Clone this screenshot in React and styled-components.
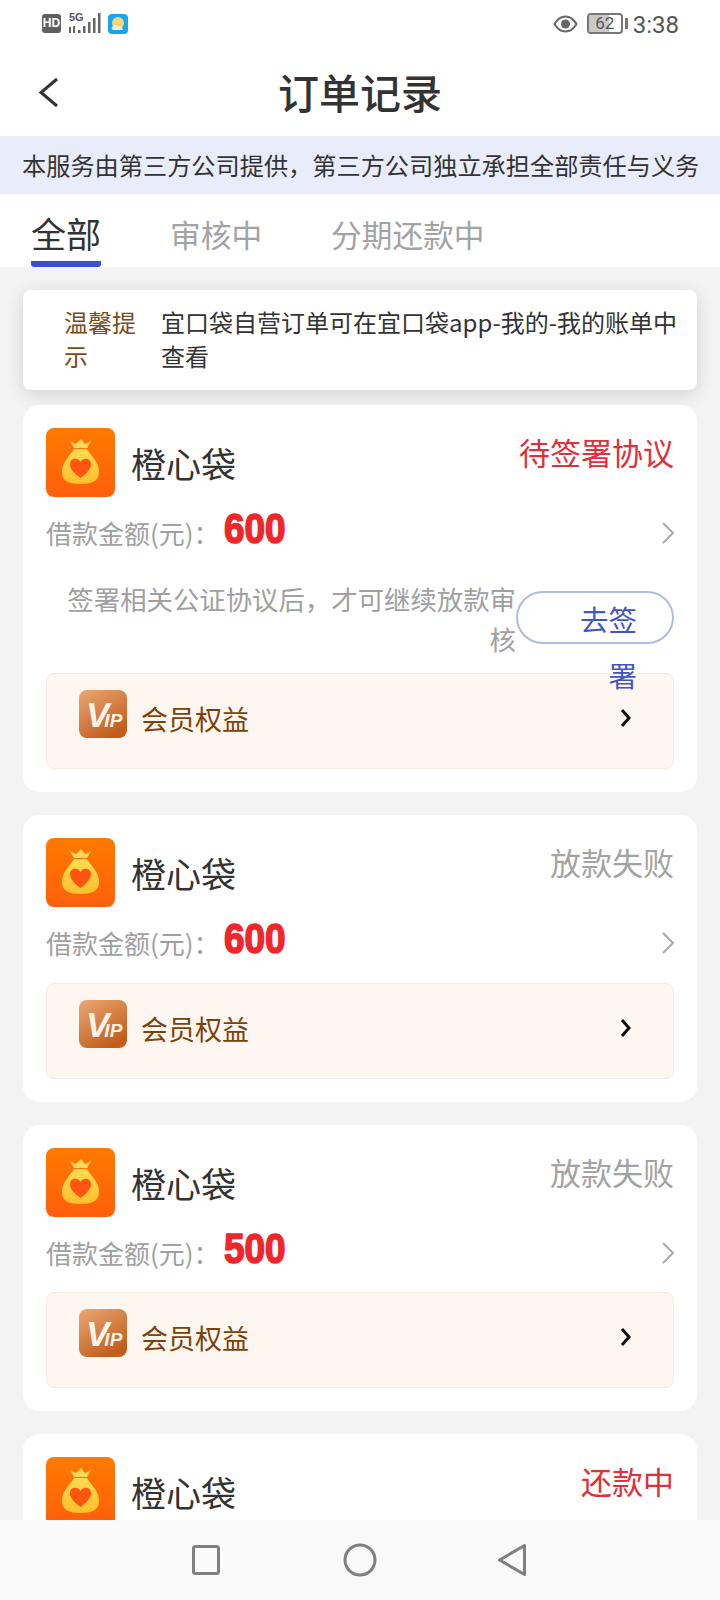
import styled, { createGlobalStyle } from "styled-components";

const GlobalStyle = createGlobalStyle`
    html, body {
        margin: 0;
        padding: 0;
        background: #f3f3f3;
    }
    * {
        box-sizing: border-box;
    }
`

const Page = styled.div`
    width: 720px;
    height: 1600px;
    display: flex;
    flex-direction: column;
    overflow: hidden;
    background: #f3f3f3;
    font-family: "Noto Sans CJK SC", "Noto Sans", sans-serif;
    color: #333;
`

const StatusBar = styled.div`
    height: 50px;
    flex: none;
    display: flex;
    align-items: center;
    justify-content: space-between;
    padding: 0 41px 3px 42px;
    background: #fff;
`

const StatusGroup = styled.div`
    display: flex;
    align-items: center;
`

const HdBadge = styled.span`
    width: 19px;
    height: 19px;
    border-radius: 3px;
    background: #5f5f5f;
    color: #fff;
    font: bold 12px/19px "Liberation Sans", sans-serif;
    text-align: center;
`

const SignalBox = styled.div`
    position: relative;
    width: 34px;
    height: 22px;
    margin: 0 6px 0 7px;
`

const FiveG = styled.span`
    position: absolute;
    left: 1px;
    top: -2px;
    font: bold 11px/12px "Liberation Sans Narrow", "Liberation Sans", sans-serif;
    color: #555;
`

const Time = styled.span`
    margin-left: 5px;
    margin-top: 2px;
    font: 24px/30px "Roboto", "Liberation Sans", sans-serif;
    color: #555;
`

const BatteryBox = styled.div`
    position: relative;
    width: 36px;
    height: 21px;
    margin-left: 9px;
    border: 2px solid #777;
    border-radius: 4px;
    overflow: hidden;
    font: 17px/17px "Roboto", "Liberation Sans", sans-serif;
    color: #555;
    text-align: center;
`

const BatteryFill = styled.div`
    position: absolute;
    left: 0;
    top: 0;
    bottom: 0;
    width: ${p => p.$level}%;
    background: #c9c9c9;
`

const BatteryValue = styled.span`
    position: relative;
`

const BatteryCap = styled.div`
    width: 3px;
    height: 11px;
    margin-left: 2px;
    background: #777;
`

const NavBar = styled.div`
    height: 86px;
    flex: none;
    display: flex;
    align-items: center;
    justify-content: center;
    position: relative;
    padding-bottom: 4px;
    background: #fff;
`

const BackButton = styled.div`
    position: absolute;
    left: 36px;
    top: 24px;
    width: 26px;
    height: 36px;
`

const Title = styled.h1`
    margin: 0;
    font-size: 41px;
    font-weight: 500;
    line-height: 56px;
    color: #333;
`

const Notice = styled.div`
    height: 58px;
    flex: none;
    padding-left: 22px;
    background: #e9ecfb;
    font-size: 24.2px;
    line-height: 58px;
    color: #333;
    white-space: nowrap;
`

const Tabs = styled.div`
    height: 73px;
    flex: none;
    display: flex;
    padding-left: 31px;
    gap: 69px;
    background: #fff;
`

const Tab = styled.div`
    height: 73px;
    border-bottom: 6px solid ${p => (p.$active ? "#3a50d0" : "transparent")};
    border-radius: 0 0 3px 3px;
    font-size: ${p => (p.$active ? "35px" : "30.7px")};
    line-height: ${p => (p.$active ? "77px" : "80px")};
    color: ${p => (p.$active ? "#333" : "#a3a3a3")};
    white-space: nowrap;
`

const List = styled.div`
    flex: 1;
    min-height: 0;
    overflow: hidden;
    display: flex;
    flex-direction: column;
    gap: 23px;
    padding: 23px 23px 0;
`

const TipCard = styled.div`
    flex: none;
    height: 100px;
    margin-bottom: -8px;
    display: flex;
    padding: 15px 0 0 41px;
    background: #fff;
    border-radius: 8px;
    box-shadow: 0 4px 18px rgba(0, 0, 0, 0.14);
    font-size: 24px;
    line-height: 34px;
`

const TipLabel = styled.div`
    width: 72px;
    flex: none;
    color: #7a4a17;
`

const TipText = styled.div`
    width: 530px;
    margin-left: 25px;
    color: #333;
`

const Card = styled.div`
    flex: none;
    padding: 23px;
    background: #fff;
    border-radius: 16px;
`

const CardHead = styled.div`
    height: 69px;
    display: flex;
`

const BrandName = styled.div`
    margin-left: 16px;
    font-size: 35px;
    line-height: 69px;
    color: #333;
`

const OrderStatus = styled.div`
    margin-left: auto;
    font-size: 31px;
    line-height: 48px;
    color: ${p => (p.$alert ? "#e0303a" : "#a3a3a3")};
`

const AmountRow = styled.div`
    height: 48px;
    margin-top: 12px;
    display: flex;
    align-items: center;
`

const AmountLabel = styled.span`
    font-size: 26px;
    line-height: 48px;
    color: #a0a0a0;
`

const AmountValue = styled.span`
    margin-left: 4px;
    width: 62px;
    transform: scaleX(0.88);
    transform-origin: left center;
    font: bold 42px/48px "Liberation Sans", sans-serif;
    color: #f0262c;
    -webkit-text-stroke: 1.6px #f0262c;
    position: relative;
    top: -4px;
`

const RowArrow = styled.div`
    margin-left: auto;
    width: 16px;
    height: 24px;
    margin-right: -2px;
`

const SignRow = styled.div`
    height: 80px;
    margin-top: 22px;
    margin-bottom: 14px;
    display: flex;
    justify-content: flex-end;
`

const SignText = styled.div`
    width: 470px;
    padding-left: 20px;
    font-size: 26.4px;
    line-height: 40px;
    color: #a0a0a0;
    text-align: right;
`

const SignButton = styled.div`
    width: 158px;
    height: 53px;
    margin-top: 12px;
    flex: none;
    display: flex;
    justify-content: flex-end;
    padding-right: 35px;
    border: 2px solid #b0bbe4;
    border-radius: 27px;
`

const SignLabel = styled.div`
    width: 58px;
    flex: none;
    margin-top: -2px;
    font-size: 28.5px;
    line-height: 56px;
    color: #3f55c8;
    text-align: right;
`

const VipBox = styled.div`
    height: 96px;
    margin-top: ${p => (p.$plain ? "15.5px" : "0")};
    display: flex;
    padding: 16px 40px 0 32px;
    background: #fdf6f1;
    border: 1px solid #f8ebe1;
    border-radius: 8px;
`

const VipName = styled.div`
    margin-left: 14px;
    font-size: 27px;
    line-height: 58px;
    color: #7c4208;
`

const VipArrow = styled.div`
    margin-left: auto;
    width: 14px;
    height: 22px;
    margin-top: 17px;
`

const SystemBar = styled.div`
    height: 80px;
    flex: none;
    display: flex;
    align-items: center;
    justify-content: center;
    gap: 120px;
    background: #fafafa;
`

function BagIcon() {
    return (
        <svg width="69" height="69" viewBox="0 0 69 69">
            <defs>
                <linearGradient id="bagBg" x1="0" y1="0" x2="0" y2="1">
                    <stop offset="0" stopColor="#ff7a00" />
                    <stop offset="1" stopColor="#ff5f0c" />
                </linearGradient>
                <linearGradient id="bagFill" x1="0" y1="0" x2="0" y2="1">
                    <stop offset="0" stopColor="#ffdc50" />
                    <stop offset="1" stopColor="#ffbf2c" />
                </linearGradient>
            </defs>
            <rect width="69" height="69" rx="8" fill="url(#bagBg)" />
            <path d="M24 13 L30 16 L35 11 L39 16 L45 13 L41 20 H28 Z" fill="#ffd75a" />
            <path d="M28 21 H41 C44 27 53 33 53 44 C53 52 48 56 34.5 56 C21 56 16 52 16 44 C16 33 25 27 28 21 Z" fill="url(#bagFill)" />
            <path d="M34.5 50 C28 45 24 41 24 36 C24 30 32 29 34.5 34 C37 29 45 30 45 36 C45 41 41 45 34.5 50 Z" fill="#ff5510" />
        </svg>
    )
}

function VipIcon() {
    return (
        <svg width="48" height="48" viewBox="0 0 48 48">
            <defs>
                <linearGradient id="vipBg" x1="0" y1="0" x2="0.6" y2="1">
                    <stop offset="0" stopColor="#eaa874" />
                    <stop offset="1" stopColor="#c25e1c" />
                </linearGradient>
            </defs>
            <rect width="48" height="48" rx="8" fill="url(#vipBg)" />
            <text x="7" y="37" fontFamily="Liberation Sans" fontWeight="bold" fontStyle="italic" fill="#fdf3ea">
                <tspan fontSize="35">V</tspan>
                <tspan fontSize="19" dx="-5">IP</tspan>
            </text>
        </svg>
    )
}

function OrderCard({ status, alert, amount, sign }) {
    return (
        <Card>
            <CardHead>
                <BagIcon />
                <BrandName>橙心袋</BrandName>
                <OrderStatus $alert={alert}>{status}</OrderStatus>
            </CardHead>
            {amount && (
                <>
                    <AmountRow>
                        <AmountLabel>借款金额(元)：</AmountLabel>
                        <AmountValue>{amount}</AmountValue>
                        <RowArrow>
                            <svg width="16" height="24" viewBox="0 0 16 24" fill="none" stroke="#a8a8a8" strokeWidth="2">
                                <path d="M3 2 L13 12 L3 22" />
                            </svg>
                        </RowArrow>
                    </AmountRow>
                    {sign && (
                        <SignRow>
                            <SignText>签署相关公证协议后，才可继续放款审核</SignText>
                            <SignButton>
                                <SignLabel>去签署</SignLabel>
                            </SignButton>
                        </SignRow>
                    )}
                    <VipBox $plain={!sign}>
                        <VipIcon />
                        <VipName>会员权益</VipName>
                        <VipArrow>
                            <svg width="14" height="22" viewBox="0 0 14 22" fill="none" stroke="#111" strokeWidth="3">
                                <path d="M3 3 L10 11 L3 19" />
                            </svg>
                        </VipArrow>
                    </VipBox>
                </>
            )}
        </Card>
    )
}

function App() {
    return (
        <Page>
            <GlobalStyle />
            <StatusBar>
                <StatusGroup>
                    <HdBadge>HD</HdBadge>
                    <SignalBox>
                        <FiveG>5G</FiveG>
                        <svg width="34" height="22" viewBox="0 0 34 22" fill="#666">
                            <rect x="1" y="14" width="2" height="6" />
                            <rect x="5" y="13" width="2" height="7" />
                            <rect x="10" y="17" width="2.5" height="3" />
                            <rect x="15" y="13" width="2.5" height="7" />
                            <rect x="20" y="9" width="2.5" height="11" />
                            <rect x="25" y="5" width="2.5" height="15" />
                            <rect x="30" y="0" width="2.5" height="20" />
                        </svg>
                    </SignalBox>
                    <svg width="20" height="20" viewBox="0 0 20 20">
                        <rect width="20" height="20" rx="4" fill="#1aa6ee" />
                        <circle cx="10" cy="9" r="6" fill="#f7d774" />
                        <path d="M4 13 C6 10 9 11 10 13 C12 12 15 13 15 16 H6 C4 16 3 15 4 13 Z" fill="#dff0f8" />
                    </svg>
                </StatusGroup>
                <StatusGroup>
                    <svg width="25" height="18" viewBox="0 0 25 18">
                        <path d="M1.5 9 C5 3 9 1.5 12.5 1.5 C16 1.5 20 3 23.5 9 C20 15 16 16.5 12.5 16.5 C9 16.5 5 15 1.5 9 Z" fill="none" stroke="#666" strokeWidth="2" />
                        <circle cx="12.5" cy="9" r="4.5" fill="#666" />
                    </svg>
                    <BatteryBox>
                        <BatteryFill $level={62} />
                        <BatteryValue>62</BatteryValue>
                    </BatteryBox>
                    <BatteryCap />
                    <Time>3:38</Time>
                </StatusGroup>
            </StatusBar>
            <NavBar>
                <BackButton>
                    <svg width="26" height="36" viewBox="0 0 26 36" fill="none" stroke="#333" strokeWidth="3">
                        <path d="M21 5 L5 18.5 L21 32" />
                    </svg>
                </BackButton>
                <Title>订单记录</Title>
            </NavBar>
            <Notice>本服务由第三方公司提供，第三方公司独立承担全部责任与义务</Notice>
            <Tabs>
                <Tab $active>全部</Tab>
                <Tab>审核中</Tab>
                <Tab>分期还款中</Tab>
            </Tabs>
            <List>
                <TipCard>
                    <TipLabel>温馨提示</TipLabel>
                    <TipText>宜口袋自营订单可在宜口袋app-我的-我的账单中查看</TipText>
                </TipCard>
                <OrderCard status="待签署协议" alert amount="600" sign />
                <OrderCard status="放款失败" amount="600" />
                <OrderCard status="放款失败" amount="500" />
                <OrderCard status="还款中" alert />
            </List>
            <SystemBar>
                <svg width="32" height="34" viewBox="0 0 32 34" fill="none" stroke="#808080" strokeWidth="3">
                    <rect x="2.5" y="3.5" width="25" height="27" rx="2" />
                </svg>
                <svg width="34" height="34" viewBox="0 0 34 34" fill="none" stroke="#808080" strokeWidth="3">
                    <circle cx="17" cy="17" r="15" />
                </svg>
                <svg width="32" height="34" viewBox="0 0 32 34" fill="none" stroke="#808080" strokeWidth="3" strokeLinejoin="round">
                    <path d="M27.5 2.5 V31.5 L2.5 17 Z" />
                </svg>
            </SystemBar>
        </Page>
    )
}

export default App
